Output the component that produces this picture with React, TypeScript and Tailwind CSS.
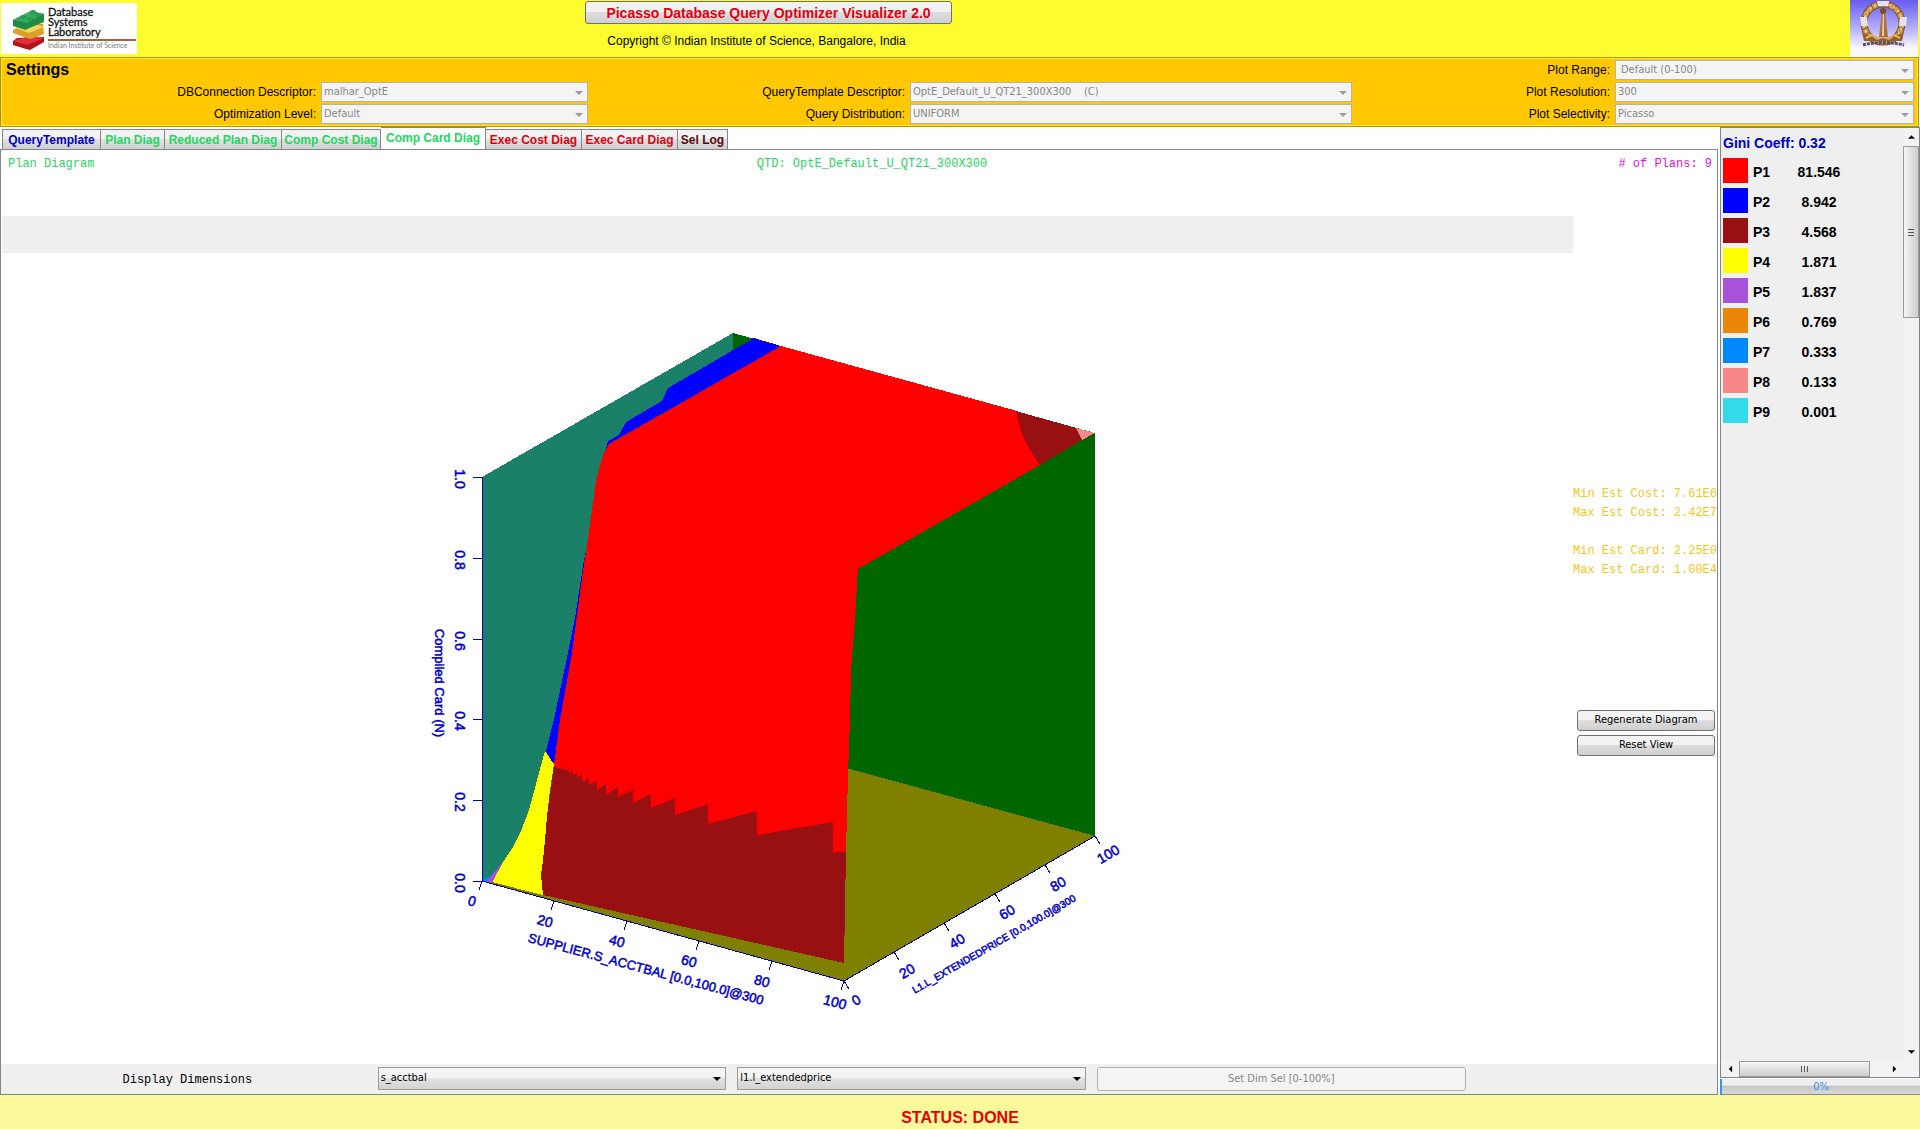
import { useState } from "react";
import type { ReactNode } from "react";

type Plan = {
  name: string;
  share: string;
  swatch: string;
};

const PLANS: Plan[] = [
  { name: "P1", share: "81.546", swatch: "bg-[#ff0000]" },
  { name: "P2", share: "8.942", swatch: "bg-[#0000ff]" },
  { name: "P3", share: "4.568", swatch: "bg-[#981012]" },
  { name: "P4", share: "1.871", swatch: "bg-[#ffff00]" },
  { name: "P5", share: "1.837", swatch: "bg-[#a653da]" },
  { name: "P6", share: "0.769", swatch: "bg-[#ea8708]" },
  { name: "P7", share: "0.333", swatch: "bg-[#0088ff]" },
  { name: "P8", share: "0.133", swatch: "bg-[#f88888]" },
  { name: "P9", share: "0.001", swatch: "bg-[#33daec]" },
];

const TABS = [
  { label: "QueryTemplate", style: "w-[99px] text-[#0000cc]" },
  { label: "Plan Diag", style: "w-16 text-[#1fd65f]" },
  { label: "Reduced Plan Diag", style: "w-[117px] text-[#1fd65f]" },
  { label: "Comp Cost Diag", style: "w-[99px] text-[#1fd65f]" },
  { label: "Comp Card Diag", style: "w-[105px] text-[#1fd65f]" },
  { label: "Exec Cost Diag", style: "w-24 text-[#e00010]" },
  { label: "Exec Card Diag", style: "w-24 text-[#e00010]" },
  { label: "Sel Log", style: "w-[50px] text-[#5c0a10]" },
];

// Axis ticks: position on the axis and centre of the label
const Z_TICKS = [
  { label: "1.0", y: 477 },
  { label: "0.8", y: 558 },
  { label: "0.6", y: 639 },
  { label: "0.4", y: 719 },
  { label: "0.2", y: 800 },
  { label: "0.0", y: 881 },
];

const X_TICKS = [
  { label: "0", x: 482, y: 881, tx: 472, ty: 901 },
  { label: "20", x: 554, y: 901, tx: 545, ty: 921 },
  { label: "40", x: 627, y: 921, tx: 617, ty: 941 },
  { label: "60", x: 699, y: 941, tx: 689, ty: 961 },
  { label: "80", x: 772, y: 961, tx: 762, ty: 981 },
  { label: "100", x: 844, y: 981, tx: 835, ty: 1002 },
];

const Y_TICKS = [
  { label: "0", x: 844, y: 981, tx: 856, ty: 1000 },
  { label: "20", x: 894, y: 952, tx: 907, ty: 971 },
  { label: "40", x: 944, y: 923, tx: 957, ty: 941 },
  { label: "60", x: 995, y: 894, tx: 1007, ty: 912 },
  { label: "80", x: 1045, y: 865, tx: 1058, ty: 884 },
  { label: "100", x: 1095, y: 836, tx: 1108, ty: 854 },
];

function Arrow({ className }: { className: string }) {
  return (
    <svg viewBox="0 0 8 4" className={className} aria-hidden="true">
      <path d="M0 0h8L4 4z" fill="currentColor" />
    </svg>
  );
}

function SettingSelect({
  id,
  value,
  className = "",
}: {
  id: string;
  value: string;
  className?: string;
}) {
  return (
    <div className="relative h-5">
      <select
        id={id}
        disabled
        className={`block h-full w-full appearance-none border border-[#b4b4ac] bg-[#f4f4f4] pl-[2px] font-['DejaVu_Sans_Condensed','DejaVu_Sans',sans-serif] text-[11px] whitespace-pre text-[#868686] opacity-100 ${className}`}
      >
        <option>{value}</option>
      </select>
      <Arrow className="pointer-events-none absolute top-[9px] right-[5px] h-1 w-2 text-[#9c9c9c]" />
    </div>
  );
}

function SettingLabel({
  htmlFor,
  children,
}: {
  htmlFor: string;
  children: ReactNode;
}) {
  return (
    <label htmlFor={htmlFor} className="pr-[5px] text-right text-xs leading-5">
      {children}
    </label>
  );
}

function DimensionSelect({ id, value }: { id: string; value: string }) {
  return (
    <div className="relative h-[23px]">
      <select
        id={id}
        aria-label={value}
        className="block h-full w-full appearance-none border border-[#9a9a9a] bg-linear-to-b from-[#f4f4f4] from-45% via-[#e2e2e2] via-50% to-[#d2d2d2] pl-[2px] font-['DejaVu_Sans_Condensed','DejaVu_Sans',sans-serif] text-[11px] text-black"
      >
        <option>{value}</option>
      </select>
      <Arrow className="pointer-events-none absolute top-[10px] right-[5px] h-1 w-2 text-black" />
    </div>
  );
}

function LabLogo() {
  return (
    <svg viewBox="0 0 136 51" className="h-[51px] w-[136px]">
      <rect width="136" height="51" fill="#fff" />
      {/* stacked bricks */}
      <path d="M12 38l4-3 27-1v5l-14 8-4-1-13-4z" fill="#b3141a" />
      <path d="M12 38l17-5 14 2-17 7z" fill="#e0303a" />
      <path d="M12 27l10-6 20 0 1 10-13 5-4-1-14-5z" fill="#d9a12b" />
      <path d="M14 25l17-5 12 4-15 6z" fill="#f4d45a" />
      <path d="M12 17l18-9 13 3v8l-17 7-1 1-13-4z" fill="#1f8b45" />
      <path d="M12 17l18-9 13 3-17 9z" fill="#35a95c" />
      <ellipse cx="22" cy="14" rx="3" ry="2" fill="#2a9950" />
      <ellipse cx="32" cy="9" rx="3" ry="2" fill="#2a9950" />
      <ellipse cx="29" cy="16" rx="3" ry="2" fill="#2a9950" />
      <ellipse cx="37" cy="12" rx="3" ry="2" fill="#2a9950" />
      <g className="font-['Lato',sans-serif] text-[11px]" fill="#111" stroke="#111" strokeWidth="0.3">
        <text x="47" y="13">Database</text>
        <text x="47" y="23">Systems</text>
        <text x="47" y="33">Laboratory</text>
      </g>
      <rect x="47" y="36" width="88" height="2" fill="#a0643c" />
      <text x="47" y="45" fill="#777" className="font-['Lato',sans-serif] text-[7px]">
        Indian Institute of Science
      </text>
    </svg>
  );
}

function InstituteEmblem() {
  return (
    <svg viewBox="0 0 68 57" className="h-[57px] w-[68px]">
      <defs>
        <linearGradient id="sky" x1="0" y1="0" x2="0" y2="1">
          <stop offset="0" stopColor="#6a5cf0" />
          <stop offset="0.5" stopColor="#b4b0fa" />
          <stop offset="0.85" stopColor="#fbf8ff" />
        </linearGradient>
      </defs>
      <rect width="68" height="57" fill="url(#sky)" />
      <circle cx="33" cy="23" r="19" fill="none" stroke="#7d5226" strokeWidth="7" />
      <circle cx="33" cy="23" r="19" fill="none" stroke="#cf9c58" strokeWidth="5" strokeDasharray="5 1" />
      <circle cx="33" cy="23" r="19" fill="none" stroke="#ecc98a" strokeWidth="2" strokeDasharray="2 3" />
      <path d="M12 32q21 12 42 0l-2 9H14z" fill="#96602a" />
      <path d="M16 38l6-3 5 4 6-2 6 2 5-4 6 3" fill="none" stroke="#e0b264" strokeWidth="2" />
      <path d="M29 37l3-26h3l3 26z" fill="#a8713f" />
      <path d="M32 36l1-24h1v24z" fill="#ecd0a0" />
      <circle cx="33" cy="11" r="3" fill="#7c4d26" />
      <path d="M27 1h12l-1 5H28zM10 17h7l1 9h-7zM50 17h7l-1 9h-7z" fill="#e4e4e8" />
      <path d="M13 45q20-5 41 0" fill="none" stroke="#55506a" strokeWidth="3" strokeDasharray="3 1" />
    </svg>
  );
}

function PlanDiagram() {
  return (
    <svg
      viewBox="2 253 1571 811"
      preserveAspectRatio="xMinYMid meet"
      className="absolute inset-0 h-full w-full"
      role="img"
      aria-label="Compiled cardinality diagram"
    >
      <g shapeRendering="crispEdges">
        {/* walls and floor */}
        <path d="M482 477L733 333V737L482 881z" fill="#1b8068" />
        <path d="M733 333L1095 433V836L733 737z" fill="#006600" />
        <path d="M482 881L733 737L1095 836L844 981z" fill="#808000" />

        {/* P2 */}
        <path
          d="M754 338L781 346L800 370L610 480L572 653L560 720L554 765L546 751L554 719L568 653L575 618L583 566L605 453L608 441L619 435L626 422L662 401L668 388z"
          fill="#0000ff"
        />
        {/* P3 front */}
        <path
          d="M554 766L846 790V851L844 963L543 895L541 875L543 860L547 816z"
          fill="#981012"
        />
        {/* P1 */}
        <path
          d="M781 346L1017 411L1040 465L858 569L855 620L851 670L850 720L848 775L846 851L833 853V822L757 835V811L708 824V804L675 815V798L651 808V794L633 803V790L618 797V787L606 795V784L597 790V781L589 785V778L582 782V775L577 778V773L573 775V770L569 773V769L565 771V768L561 770V767L557 769L554 765L560 720L572 653L582 578L590 525L596 480L603 455L609 444z"
          fill="#ff0000"
        />
        {/* P3 and P8 corner */}
        <path d="M1016 411L1076 428L1082 440L1040 465L1030 450L1022 434z" fill="#981012" />
        <path d="M1076 428L1095 433L1082 440z" fill="#f88888" />
        {/* P4 */}
        <path
          d="M545 751L549 757L554 764L550 790L547 816L545 840L543 860L541 875L543 895L492 882L503 862L513 847L521 831L529 810L535 788L540 769z"
          fill="#ffff00"
        />
        {/* P5 and P7 */}
        <path d="M487 881L503 862L492 883z" fill="#a653da" />
        <path d="M482 881L491 875L487 882z" fill="#0088ff" />
      </g>

      {/* axes */}
      <g stroke="#0000b0" fill="none" shapeRendering="crispEdges">
        <path d="M482 477V881L844 981L1095 836" />
        {Z_TICKS.map((t) => (
          <path key={t.label} d={`M473 ${t.y}H482`} />
        ))}
        {X_TICKS.map((t) => (
          <path key={t.label} d={`M${t.x} ${t.y}l-3 9`} />
        ))}
        {Y_TICKS.map((t) => (
          <path key={t.label} d={`M${t.x} ${t.y}l5 8`} />
        ))}
      </g>
      <g
        fill="#0000c8"
        stroke="#0000c8"
        strokeWidth="0.5"
        textAnchor="middle"
        dominantBaseline="central"
        className="font-['Liberation_Sans_Narrow','Liberation_Sans',sans-serif] text-[14px]"
      >
        {Z_TICKS.map((t) => (
          <text key={t.label} transform={`translate(460 ${t.y + 2}) rotate(90)`}>
            {t.label}
          </text>
        ))}
        {X_TICKS.map((t) => (
          <text key={t.label} transform={`translate(${t.tx} ${t.ty}) rotate(15)`}>
            {t.label}
          </text>
        ))}
        {Y_TICKS.map((t) => (
          <text key={t.label} transform={`translate(${t.tx} ${t.ty}) rotate(-30)`}>
            {t.label}
          </text>
        ))}
        <text transform="translate(439 683) rotate(90)" className="text-[13px]">
          Compiled Card (N)
        </text>
        <text transform="translate(646 969) rotate(15)" className="text-[13px]">
          SUPPLIER.S_ACCTBAL [0.0,100.0]@300
        </text>
        <text transform="translate(994 944) rotate(-30)" className="text-[10px]">
          L1.L_EXTENDEDPRICE [0.0,100.0]@300
        </text>
      </g>
    </svg>
  );
}

function PlanLegend() {
  return (
    <aside className="flex w-[200px] shrink-0 flex-col">
      <div className="flex min-h-0 flex-1 flex-col border border-[#80868e] bg-[#efefef]">
        <div className="flex min-h-0 flex-1">
          <div className="flex-1 pt-[5px] pl-[2px] text-sm font-bold">
            <h2 className="h-[25px] leading-5 text-[#0000cc]">Gini Coeff: 0.32</h2>
            <table className="text-black">
              <tbody>
                {PLANS.map((plan) => (
                  <tr key={plan.name} className="h-[30px] align-top">
                    <td className="w-[30px] p-0">
                      <div className={`size-[25px] ${plan.swatch}`} />
                    </td>
                    <td className="w-[34px] p-0 leading-7">{plan.name}</td>
                    <td className="w-16 p-0 text-center leading-7">
                      {plan.share}
                    </td>
                  </tr>
                ))}
              </tbody>
            </table>
          </div>
          {/* vertical scroll bar */}
          <div className="flex w-4 flex-col bg-[#f2f2f2]">
            <button className="flex h-[18px] items-center justify-center" aria-label="Scroll up">
              <Arrow className="h-1 w-[7px] rotate-180" />
            </button>
            <div className="flex h-[172px] flex-col items-center justify-center gap-[2px] border border-[#9a9a9a] bg-linear-to-r from-[#f6f6f6] to-[#cdcdcd]">
              <span className="h-px w-[6px] bg-[#555]" />
              <span className="h-px w-[6px] bg-[#555]" />
              <span className="h-px w-[6px] bg-[#555]" />
            </div>
            <button className="mt-auto flex h-[18px] items-center justify-center" aria-label="Scroll down">
              <Arrow className="h-1 w-[7px]" />
            </button>
          </div>
        </div>
        {/* horizontal scroll bar */}
        <div className="flex h-4 bg-[#f2f2f2] pr-4">
          <button className="flex w-[18px] items-center justify-center" aria-label="Scroll left">
            <Arrow className="h-1 w-[7px] rotate-90" />
          </button>
          <div className="flex w-[131px] items-center justify-center gap-[2px] border border-[#9a9a9a] bg-linear-to-b from-[#f6f6f6] to-[#cdcdcd]">
            <span className="h-[6px] w-px bg-[#555]" />
            <span className="h-[6px] w-px bg-[#555]" />
            <span className="h-[6px] w-px bg-[#555]" />
          </div>
          <button className="ml-auto flex w-[18px] items-center justify-center" aria-label="Scroll right">
            <Arrow className="h-1 w-[7px] -rotate-90" />
          </button>
        </div>
      </div>
      <div
        role="progressbar"
        aria-valuenow={0}
        className="mt-px flex h-4 items-center justify-center border-b border-l-2 border-b-[#8a8a8a] border-l-[#3a92ee] bg-linear-to-b from-[#eeeeee] from-40% via-[#c6c6c6] via-50% to-[#d8d8d8] font-['DejaVu_Sans_Condensed','DejaVu_Sans',sans-serif] text-[11px] leading-none text-[#3f8fe0]"
      >
        0%
      </div>
    </aside>
  );
}

const grayButton =
  "rounded-[3px] border border-[#707070] bg-linear-to-b from-[#f2f2f2] from-45% via-[#dddddd] via-50% to-[#cfcfcf]";

export default function App() {
  const [activeTab, setActiveTab] = useState("Comp Card Diag");

  return (
    <div className="flex h-screen flex-col bg-white font-['Liberation_Sans',Arial,sans-serif] text-black">
      {/* HEADER */}
      <header className="grid h-[57px] shrink-0 grid-cols-[585fr_367fr_966fr] bg-[#fcfc2e] pr-[2px]">
        <div className="pt-[3px] pl-px">
          <LabLogo />
        </div>
        <div>
          <button
            className={`mt-px block h-[23px] w-full text-sm font-bold text-[#e00010] ${grayButton}`}
          >
            Picasso Database Query Optimizer Visualizer 2.0
          </button>
          <p className="mt-2 pr-6 text-center text-xs leading-[18px] whitespace-nowrap">
            Copyright © Indian Institute of Science, Bangalore, India
          </p>
        </div>
        <div className="flex justify-end">
          <InstituteEmblem />
        </div>
      </header>

      {/* SETTINGS */}
      <section className="mr-px border border-[#a89600] bg-[#ffc800] outline outline-offset-[-2px] outline-[#ffe93c]">
        <div className="grid grid-cols-[320fr_267fr_322fr_442fr_263fr_299fr] gap-y-[2px] pt-[2px] pr-1 pb-[2px]">
          <h1 className="col-span-4 pl-[5px] text-base leading-5 font-bold">
            Settings
          </h1>
          <SettingLabel htmlFor="range">Plot Range:</SettingLabel>
          <SettingSelect id="range" value="Default (0-100)" className="pl-[5px]" />

          <SettingLabel htmlFor="connection">DBConnection Descriptor:</SettingLabel>
          <SettingSelect id="connection" value="malhar_OptE" />
          <SettingLabel htmlFor="template">QueryTemplate Descriptor:</SettingLabel>
          <SettingSelect id="template" value={"OptE_Default_U_QT21_300X300\u00a0\u00a0\u00a0 (C)"} />
          <SettingLabel htmlFor="resolution">Plot Resolution:</SettingLabel>
          <SettingSelect id="resolution" value="300" />

          <SettingLabel htmlFor="level">Optimization Level:</SettingLabel>
          <SettingSelect id="level" value="Default" />
          <SettingLabel htmlFor="distribution">Query Distribution:</SettingLabel>
          <SettingSelect id="distribution" value="UNIFORM" />
          <SettingLabel htmlFor="selectivity">Plot Selectivity:</SettingLabel>
          <SettingSelect id="selectivity" value="Picasso" />
        </div>
      </section>

      <div className="flex min-h-0 flex-1 gap-[2px]">
        <main className="flex min-w-0 flex-1 flex-col">
          {/* TABS */}
          <nav className="flex h-[22px] items-end pl-[2px] text-xs font-bold" role="tablist">
            {TABS.map((tab) => (
              <button
                key={tab.label}
                role="tab"
                aria-selected={tab.label === activeTab}
                onClick={() => setActiveTab(tab.label)}
                className={`border-t border-r border-[#80868e] whitespace-nowrap first:border-l ${tab.style} ${
                  tab.label === activeTab
                    ? "h-[22px] bg-white pb-[2px]"
                    : "h-5 bg-linear-to-b from-[#f2f2f2] from-45% via-[#e0e0e0] via-50% to-[#cfcfcf]"
                }`}
              >
                {tab.label}
              </button>
            ))}
          </nav>

          <div className="flex min-h-0 flex-1 flex-col border border-[#80868e] font-['Liberation_Mono','Courier_New',monospace] text-xs">
            <div className="flex h-[66px] items-start justify-between pt-1 pr-[5px] pl-[7px] leading-5">
              <p className="flex-1 text-[#1fd65f]">Plan Diagram</p>
              <p className="ml-6 text-[#1fd65f]">QTD: OptE_Default_U_QT21_300X300</p>
              <p className="flex-1 text-right text-[#e010e0]">
                # of Plans: 9
              </p>
            </div>

            <div className="flex min-h-0 flex-1">
              <div className="flex min-w-0 flex-1 flex-col pl-px">
                <div className="h-[37px] bg-[#efefef]" />
                <div className="relative min-h-0 flex-1">
                  <PlanDiagram />
                </div>
              </div>
              <div className="flex w-[144px] flex-col pt-[269px]">
                <div className="leading-[19px] whitespace-nowrap text-[#f2c71c]">
                  <p>Min Est Cost: 7.61E6</p>
                  <p>Max Est Cost: 2.42E7</p>
                  <br />
                  <p>Min Est Card: 2.25E0</p>
                  <p>Max Est Card: 1.00E4</p>
                </div>
                <div className="mt-[130px] flex flex-col gap-1 pr-[2px] pl-1 font-['DejaVu_Sans_Condensed','DejaVu_Sans',sans-serif] text-[11px]">
                  <button className={`h-[21px] ${grayButton}`}>
                    Regenerate Diagram
                  </button>
                  <button className={`h-[21px] ${grayButton}`}>
                    Reset View
                  </button>
                </div>
              </div>
            </div>

            {/* DIMENSIONS */}
            <div className="grid h-[30px] grid-cols-[358fr_348fr_348fr_368fr_240fr] items-start gap-x-[11px] bg-[#efefef] pt-[3px] pl-[7px]">
              <label htmlFor="dim-x" className="text-center leading-[26px]">
                Display Dimensions
              </label>
              <DimensionSelect id="dim-x" value="s_acctbal" />
              <DimensionSelect id="dim-y" value="l1.l_extendedprice" />
              <button
                disabled
                className="h-6 rounded-[3px] border border-[#b0b0b0] bg-[#f4f4f4] font-['DejaVu_Sans_Condensed','DejaVu_Sans',sans-serif] text-[11px] text-[#868686]"
              >
                Set Dim Sel [0-100%]
              </button>
            </div>
          </div>
        </main>

        <PlanLegend />
      </div>

      {/* STATUS */}
      <footer className="flex h-[34px] shrink-0 items-center justify-center bg-[#f9f99b] pt-3 text-base font-bold text-[#e60000]">
        STATUS: DONE
      </footer>
    </div>
  );
}
